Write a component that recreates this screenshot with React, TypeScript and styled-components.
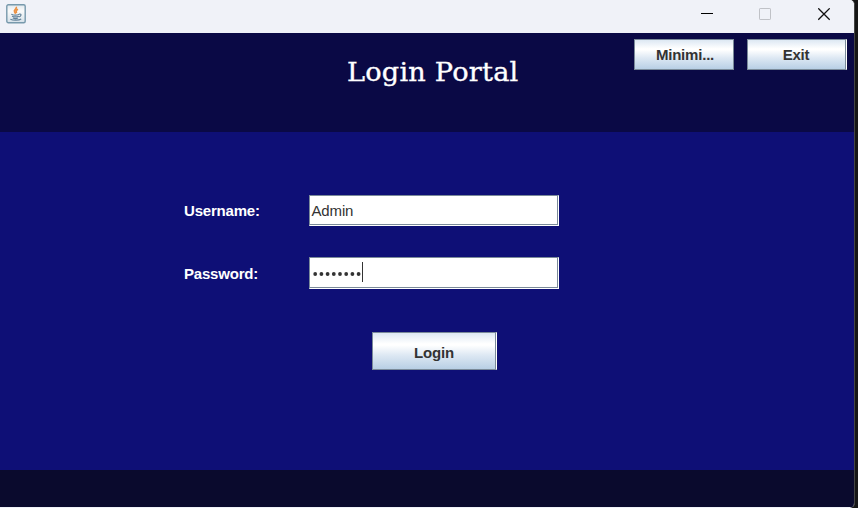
import React from 'react';
import styled, { createGlobalStyle } from 'styled-components';

const GlobalStyle = createGlobalStyle`
  * { box-sizing: border-box; }
  body { margin: 0; background: #161616; overflow: hidden; }
`;

const Screen = styled.div`
  width: 858px;
  height: 508px;
  background: #161616;
  font-family: 'Liberation Sans', Arial, sans-serif;
`;

const Window = styled.div`
  width: 855px;
  height: 508px;
  display: flex;
  flex-direction: column;
  background: #f0f2f8;
  border-right: 1px solid #444444;
  border-radius: 0 5px 5px 0;
  overflow: hidden;
`;

const TitleBar = styled.div`
  height: 33px;
  flex: none;
  display: flex;
  justify-content: space-between;
  align-items: flex-start;
  padding: 4px 23px 0 6px;
  background: #f0f2f8;
`;

const WindowControls = styled.div`
  display: grid;
  grid-template-columns: 58px 59px 13px;
  padding-top: 4px;

  svg { display: block; }
`;

const Header = styled.header`
  height: 99px;
  flex: none;
  display: grid;
  grid-template-columns: 348px 286px 213px;
  background: #0a0945;
`;

const Title = styled.h1`
  grid-column: 2;
  margin: 21px 0 0 -1px;
  color: #fff;
  font: 400 26px/36px 'DejaVu Serif', serif;
  letter-spacing: 0.2px;
  white-space: nowrap;
  transform: scaleX(1.045);
  transform-origin: left;
  -webkit-text-stroke: 0.35px #fff;
`;

const HeaderActions = styled.div`
  display: flex;
  gap: 13px;
  padding-top: 6px;
`;

const MetalButton = styled.button<{ $width: number; $height: number; $lit?: boolean }>`
  width: ${(p) => p.$width}px;
  height: ${(p) => p.$height}px;
  padding: ${(p) => (p.$height > 35 ? '3px 1px 0 0' : p.$lit ? '0 2px 1px 0' : '0 0 1px 2px')};
  color: #333;
  font: 700 15px/17px 'Liberation Sans', Arial, sans-serif;
  letter-spacing: -0.2px;
  border: 1px solid #7a8a99;
  border-radius: 0;
  background: linear-gradient(#dde8f3 0%, #ffffff 30%, #ffffff 34%, #dde8f3 62%, #b8cfe5 100%);
  ${(p) => p.$lit && 'border-right-color: #fff; box-shadow: inset -1px 0 #7a8a99;'}
`;

const Body = styled.main`
  height: 338px;
  flex: none;
  padding: 63px 0 0 184px;
  background: #0e0f76;
`;

const Form = styled.div`
  display: grid;
  grid-template-columns: 125px 250px;
  row-gap: 31px;
`;

const Label = styled.label<{ $top: number }>`
  padding-top: ${(p) => p.$top}px;
  color: #fff;
  font-size: 15px;
  font-weight: 700;
  line-height: 17px;
  letter-spacing: -0.2px;
`;

const Field = styled.div<{ $height: number }>`
  height: ${(p) => p.$height}px;
  display: flex;
  align-items: flex-start;
  padding: 1px;
  background: #fff;
  border: 1px solid #7a8a99;
  border-right-color: #fff;
  border-bottom-color: #fff;
  box-shadow: inset -1px -1px #7a8a99;
`;

const FieldText = styled.span`
  padding: 5px 0 0 0.5px;
  color: #333;
  font-size: 15px;
  line-height: 17px;
  letter-spacing: -0.15px;
`;

const Dots = styled.svg`
  display: block;
  margin: 12px 0 0 2px;
`;

const Caret = styled.span`
  width: 1px;
  height: 20px;
  margin-top: 3px;
  background: #333;
`;

const Submit = styled.div`
  padding: 43px 0 0 188px;
`;

const Footer = styled.footer`
  height: 37px;
  flex: none;
  background: #0a0a2d;
`;

const JavaIcon = () => (
  <svg width="20" height="20" viewBox="0 0 20 20" fill="none">
    <defs>
      <linearGradient id="tile" x1="0" y1="0" x2="0" y2="1">
        <stop offset="0" stopColor="#dfe7ec" />
        <stop offset="0.35" stopColor="#fafbfb" />
        <stop offset="1" stopColor="#d5e1e9" />
      </linearGradient>
    </defs>
    <rect x="0.8" y="0.7" width="18.4" height="18" rx="1.5" fill="url(#tile)" stroke="#7799ac" strokeWidth="1.4" />
    <path d="M10.3 2.8c1 2.3-3 3-1.8 5l1.2 1.9M12 5.3c-3 1.5-1.6 2-1.5 3.8" stroke="#ec9142" strokeWidth="1.6" />
    <path d="M5.3 10.2c2 .9 6 .9 8 0M6 12.2c1.8.8 5 .8 6.8 0M6.8 14c1.5.6 3.8.6 5.2 0M13.2 10.1c2.9-.6 2 2.4-.5 2.9M4.4 15.2c3 1.4 8.5 1.1 10.8-.3" stroke="#64839a" strokeWidth="1.2" />
  </svg>
);

export default function App() {
  return (
    <Screen>
      <GlobalStyle />
      <Window>
        <TitleBar>
          <JavaIcon />
          <WindowControls>
            <svg width="12" height="13" viewBox="0 0 12 13">
              <path d="M0 5.5h12" stroke="#000" />
            </svg>
            <svg width="12" height="12" viewBox="0 0 12 12" fill="none">
              <rect x="0.5" y="0.5" width="11" height="11" rx="0.6" stroke="#c0c2c7" />
            </svg>
            <svg width="13" height="13" viewBox="0 0 13 13">
              <path d="M.3.3l11.4 11.4M11.7.3L.3 11.7" stroke="#111" strokeWidth="1.25" />
            </svg>
          </WindowControls>
        </TitleBar>
        <Header>
          <Title>Login Portal</Title>
          <HeaderActions>
            <MetalButton $width={100} $height={31}>Minimi...</MetalButton>
            <MetalButton $width={100} $height={31} $lit>Exit</MetalButton>
          </HeaderActions>
        </Header>
        <Body>
          <Form>
            <Label $top={7}>Username:</Label>
            <Field $height={31}>
              <FieldText>Admin</FieldText>
            </Field>
            <Label $top={8}>Password:</Label>
            <Field $height={32}>
              <Dots width="49" height="8" viewBox="0 0 49 8" fill="#333">
                {Array.from({ length: 8 }, (_, i) => (
                  <circle key={i} cx={2.2 + i * 6.2} cy="3" r="1.9" />
                ))}
              </Dots>
              <Caret />
            </Field>
          </Form>
          <Submit>
            <MetalButton $width={125} $height={38} $lit>Login</MetalButton>
          </Submit>
        </Body>
        <Footer />
      </Window>
    </Screen>
  );
}
